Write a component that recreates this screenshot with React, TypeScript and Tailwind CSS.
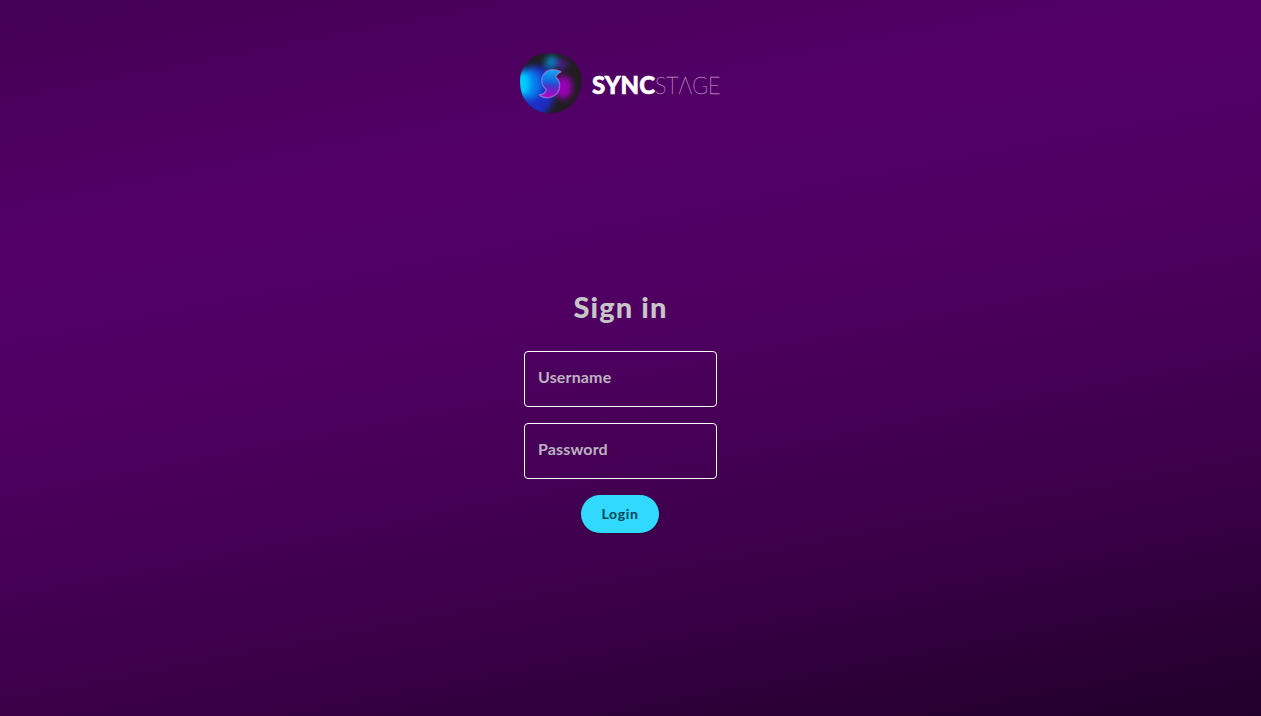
import React from "react";

function Emblem() {
  return (
    <svg viewBox="0 0 240 228" className="h-[76px] w-20 shrink-0" aria-hidden="true">
      <defs>
        <clipPath id="disc">
          <path d="M31 92 C38 64 52 46 72 35 C90 26 104 25 124 25 C145 25 160 28 176 38 C195 50 207 66 213 88 C218 108 214 132 205 151 C195 171 181 185 160 196 C140 206 112 206 91 200 C66 191 47 174 37 150 C30 132 29 108 31 92 Z" />
        </clipPath>
        <filter id="soft" x="-50%" y="-50%" width="200%" height="200%" colorInterpolationFilters="sRGB">
          <feGaussianBlur stdDeviation="10" />
        </filter>
        <linearGradient id="mark" x1="0" y1="0" x2="0" y2="1">
          <stop offset="0" stopColor="#14a8f0" />
          <stop offset="0.4" stopColor="#106ce0" />
          <stop offset="0.6" stopColor="#4a34c8" />
          <stop offset="1" stopColor="#bc00c4" />
        </linearGradient>
      </defs>
      <g clipPath="url(#disc)">
        <rect width="240" height="228" fill="#201d20" />
        <g filter="url(#soft)">
          <path d="M10 80 L70 62 L114 70 L136 120 L126 180 L96 215 L10 215 Z" fill="#1c2cc4" />
          <ellipse cx="60" cy="118" rx="36" ry="46" fill="#0878ec" />
          <ellipse cx="36" cy="116" rx="26" ry="38" fill="#00ccff" />
          <ellipse cx="125" cy="52" rx="20" ry="20" fill="#0880c0" />
          <ellipse cx="155" cy="58" rx="17" ry="17" fill="#4c1c88" />
          <ellipse cx="160" cy="127" rx="27" ry="35" fill="#9a00b6" />
        </g>
      </g>
      <path
        d="M153 80 Q141 74 128 74 C107 75 95 90 95 106 C95 119 101 127 109 133 C107 144 99 149 88 149 C96 157 108 160 121 157 C140 153 150 138 149 121 C149 109 143 101 137 97 C138 89 145 85 153 80 Z"
        fill="url(#mark)"
        stroke="#a080e0"
        strokeOpacity="0.7"
        strokeWidth="4"
        strokeLinejoin="round"
      />
    </svg>
  );
}

function Wordmark() {
  return (
    <svg viewBox="0 0 145 40" className="h-10 w-[145px] shrink-0" role="img" aria-label="SyncStage">
      <text x="8" y="29" textLength="63" lengthAdjust="spacingAndGlyphs" fill="#ffffff" stroke="#ffffff" strokeWidth="0.6" className="font-['Lato',sans-serif] text-[24px] font-black">
        SYNC
      </text>
      <text x="71" y="29" textLength="65.5" lengthAdjust="spacingAndGlyphs" fill="#b88cc4" stroke="#b88cc4" strokeWidth="0.35" className="font-['Lato',sans-serif] text-[24px] font-thin">
        STΛGE
      </text>
    </svg>
  );
}

function Field({ label, type }: { label: string; type: string }) {
  return (
    <label className="flex h-14 w-[193px] rounded border border-white">
      <input
        type={type}
        aria-label={label}
        placeholder={label}
        className="h-[49px] w-full bg-transparent px-[13px] text-[16px] font-bold tracking-[0.15px] text-[#c8c0cb] outline-none placeholder:text-[#bdb3c1]"
      />
    </label>
  );
}

export default function App() {
  return (
    <main className="flex h-screen w-full flex-col items-center overflow-hidden bg-[linear-gradient(169deg,#430054_0%,#530067_26%,#4e0061_45%,#450055_60%,#3b0048_75%,#20002a_100%)] pr-5 font-['Lato',sans-serif]">
      <header className="flex h-[121px] w-[221px] items-start pt-[45px]">
        <Emblem />
        <div className="-ml-1.5 pt-5">
          <Wordmark />
        </div>
      </header>
      <form className="flex flex-col items-center pt-[166px]" onSubmit={(e) => e.preventDefault()}>
        <h1 className="h-16 text-[29px] leading-[40px] font-black tracking-[1.1px] text-[#c8c5c9]">Sign in</h1>
        <div className="flex flex-col items-center gap-4">
          <Field label="Username" type="text" />
          <Field label="Password" type="password" />
          <button
            type="submit"
            className="mr-px h-[38px] w-[78px] rounded-full bg-[#31d9ff] pb-0.5 text-[14px] font-bold tracking-[0.7px] text-[#064455] shadow-[0_1px_3px_rgba(0,0,0,0.3)]"
          >
            Login
          </button>
        </div>
      </form>
    </main>
  );
}
